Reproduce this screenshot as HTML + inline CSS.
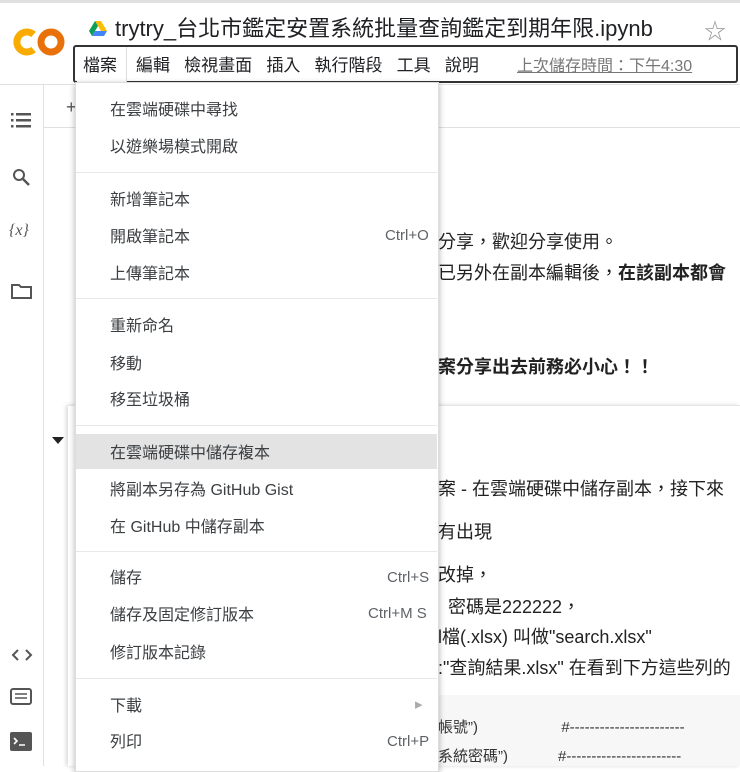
<!DOCTYPE html>
<html><head><meta charset="utf-8"><style>
*{margin:0;padding:0;box-sizing:border-box}
body{width:740px;height:766px;overflow:hidden;background:#fff;position:relative;font-family:"Liberation Sans","Noto Sans CJK TC",sans-serif;color:#212121}
.a{position:absolute;white-space:nowrap}
.mi{position:absolute;left:110px;font-size:16px;color:#3c4043;white-space:nowrap;line-height:20px;margin-top:2px}
.sc{position:absolute;font-size:15px;color:#5f6368}
.sep{position:absolute;left:76px;width:361px;height:1px;background:#e8e8e8}
.ct{position:absolute;left:438px;font-size:18px;color:#222;white-space:nowrap;line-height:22px}
</style></head><body>
<div class="a" style="left:0;top:0;width:740px;height:3px;background:#e0e0e0"></div>
<svg class="a" style="left:0;top:0" width="80" height="80">
<path d="M33.5 34.5 A10 10 0 1 0 33.5 49.5" fill="none" stroke="#f9ab00" stroke-width="7"/>
<circle cx="51" cy="42" r="10" fill="none" stroke="#e8710a" stroke-width="7"/>
</svg>
<svg class="a" style="left:89px;top:21px" width="18" height="16" viewBox="0 0 18 16"><path d="M6 0h6l6 10h-6z" fill="#fbbc04"/><path d="M6 0L0 10l3 5 6-10z" fill="#0f9d58"/><path d="M3 15h12l3-5H6z" fill="#4285f4"/></svg>
<div class="a" style="left:115px;top:15px;font-size:22px;color:#202124;line-height:28px">trytry_台北市鑑定安置系統批量查詢鑑定到期年限.ipynb</div>
<div class="a" style="left:704px;top:14px;font-size:22px;color:#999">☆</div>
<div class="a" style="left:73px;top:45px;width:665px;height:38px;border:2px solid #333;border-radius:3px"></div>
<div class="a" style="left:77px;top:47px;width:50px;height:36px;background:#fff;border-right:1px solid #ddd"></div>
<div class="a" style="left:83px;top:55px;font-size:17px;color:#202124;line-height:22px">檔案</div>
<div class="a" style="left:136px;top:55px;font-size:17px;color:#202124;line-height:22px">編輯&nbsp;&nbsp;&nbsp;檢視畫面&nbsp;&nbsp;&nbsp;插入&nbsp;&nbsp;&nbsp;執行階段&nbsp;&nbsp;&nbsp;工具&nbsp;&nbsp;&nbsp;說明</div>
<div class="a" style="left:517px;top:56px;font-size:16px;color:#777;text-decoration:underline;line-height:22px">上次儲存時間：下午4:30</div>
<div class="a" style="left:0;top:84px;width:740px;height:1px;background:#e0e0e0"></div>
<div class="a" style="left:43px;top:85px;width:1px;height:681px;background:#e0e0e0"></div>
<div class="a" style="left:43px;top:127px;width:697px;height:1px;background:#e0e0e0"></div>
<div class="a" style="left:66px;top:97px;font-size:18px;color:#555">+</div>
<svg class="a" style="left:11px;top:112px" width="20" height="16"><g fill="#555"><rect x="0" y="1" width="2.5" height="2.5"/><rect x="5" y="1" width="15" height="2.5"/><rect x="0" y="7" width="2.5" height="2.5"/><rect x="5" y="7" width="15" height="2.5"/><rect x="0" y="13" width="2.5" height="2.5"/><rect x="5" y="13" width="15" height="2.5"/></g></svg>
<svg class="a" style="left:12px;top:168px" width="18" height="18"><circle cx="7" cy="7" r="5" fill="none" stroke="#555" stroke-width="2"/><path d="M11 11l6 6" stroke="#555" stroke-width="2.5"/></svg>
<div class="a" style="left:9px;top:222px;font-size:16px;color:#555;font-style:italic;font-family:'Liberation Serif',serif">{<i>x</i>}</div>
<svg class="a" style="left:11px;top:283px" width="21" height="16"><path d="M1 2h7l2 2h10v11H1z" fill="none" stroke="#555" stroke-width="2"/></svg>
<svg class="a" style="left:11px;top:648px" width="22" height="14"><path d="M7 2L2 7l5 5M15 2l5 5-5 5" fill="none" stroke="#555" stroke-width="2"/></svg>
<svg class="a" style="left:10px;top:688px" width="22" height="17"><rect x="1" y="1" width="20" height="15" rx="2" fill="none" stroke="#555" stroke-width="2"/><path d="M5 6h12M5 10h12" stroke="#555" stroke-width="1.6"/></svg>
<svg class="a" style="left:10px;top:732px" width="22" height="19"><rect width="22" height="19" rx="2" fill="#555"/><path d="M4 6l3 3-3 3M9 13h6" stroke="#fff" stroke-width="1.6" fill="none"/></svg>
<div class="ct" style="top:231px">分享，歡迎分享使用。</div>
<div class="ct" style="top:262px">已另外在副本編輯後，<b>在該副本都會</b></div>
<div class="ct" style="top:356px"><b>案分享出去前務必小心！！</b></div>
<div class="a" style="left:68px;top:405px;width:672px;height:361px;box-shadow:-2px 0 4px rgba(0,0,0,.15);border-top:1px solid #e6e6e6"></div>
<div class="a" style="left:52px;top:437px;width:0;height:0;border-left:6px solid transparent;border-right:6px solid transparent;border-top:7px solid #222"></div>
<div class="ct" style="top:478px">案 - 在雲端硬碟中儲存副本，接下來</div>
<div class="ct" style="top:521px">有出現</div>
<div class="ct" style="top:564px">改掉，</div>
<div class="ct" style="top:596px">&nbsp;&nbsp;密碼是222222，</div>
<div class="ct" style="top:626px">l檔(.xlsx) 叫做"search.xlsx"</div>
<div class="ct" style="top:657px">:"查詢結果.xlsx" 在看到下方這些列的</div>
<div class="a" style="left:438px;top:695px;width:302px;height:71px;background:#f7f7f7"></div>
<div class="a" style="left:438px;top:716px;font-size:15px;color:#333">帳號”)&nbsp;&nbsp;&nbsp;&nbsp;&nbsp;&nbsp;&nbsp;&nbsp;&nbsp;&nbsp;&nbsp;&nbsp;&nbsp;&nbsp;&nbsp;&nbsp;&nbsp;&nbsp;&nbsp;&nbsp;#-----------------------</div>
<div class="a" style="left:438px;top:745px;font-size:15px;color:#333">系統密碼”)&nbsp;&nbsp;&nbsp;&nbsp;&nbsp;&nbsp;&nbsp;&nbsp;&nbsp;&nbsp;&nbsp;&nbsp;#-----------------------</div>
<div class="a" style="left:75px;top:82px;width:364px;height:690px;background:#fff;box-shadow:0 2px 6px rgba(0,0,0,.3);border:1px solid #ddd"></div>
<div class="a" style="left:76px;top:434px;width:361px;height:35px;background:#e3e3e3"></div>
<div class="mi" style="top:99px">在雲端硬碟中尋找</div>
<div class="mi" style="top:136px">以遊樂場模式開啟</div>
<div class="sep" style="top:172px"></div>
<div class="mi" style="top:189px">新增筆記本</div>
<div class="mi" style="top:226px">開啟筆記本<span class="sc" style="left:275px;top:-2px">Ctrl+O</span></div>
<div class="mi" style="top:263px">上傳筆記本</div>
<div class="sep" style="top:298px"></div>
<div class="mi" style="top:315px">重新命名</div>
<div class="mi" style="top:353px">移動</div>
<div class="mi" style="top:389px">移至垃圾桶</div>
<div class="sep" style="top:425px"></div>
<div class="mi" style="top:442px">在雲端硬碟中儲存複本</div>
<div class="mi" style="top:479px">將副本另存為 GitHub Gist</div>
<div class="mi" style="top:516px">在 GitHub 中儲存副本</div>
<div class="sep" style="top:551px"></div>
<div class="mi" style="top:567px">儲存<span class="sc" style="left:277px;top:-1px">Ctrl+S</span></div>
<div class="mi" style="top:604px">儲存及固定修訂版本<span class="sc" style="left:258px;top:-2px">Ctrl+M S</span></div>
<div class="mi" style="top:642px">修訂版本記錄</div>
<div class="sep" style="top:678px"></div>
<div class="mi" style="top:695px">下載<span class="sc" style="left:305px;top:-2px;color:#aaa">▸</span></div>
<div class="mi" style="top:731px">列印<span class="sc" style="left:277px;top:-1px">Ctrl+P</span></div>
</body></html>
